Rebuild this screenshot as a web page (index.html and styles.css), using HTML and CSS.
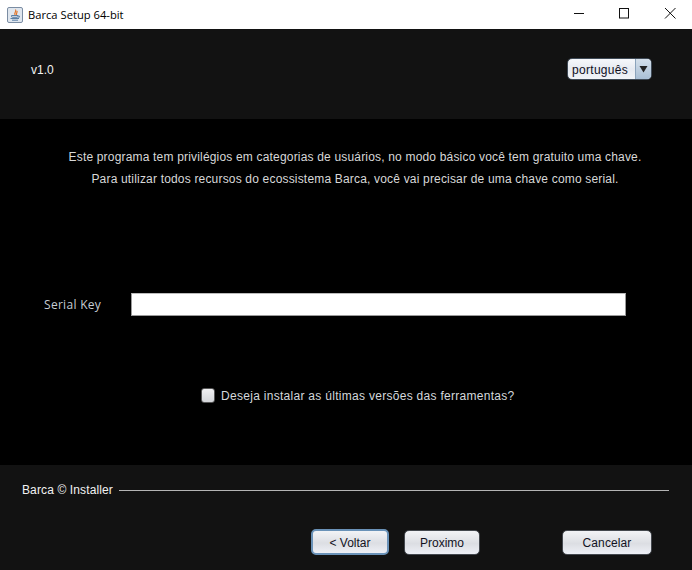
FILE: index.html
```html
<!DOCTYPE html>
<html lang="pt">
<head>
<meta charset="utf-8">
<title>Barca Setup 64-bit</title>
<link rel="stylesheet" href="styles.css">
</head>
<body>
<div class="window">
  <div class="titlebar">
    <svg class="app-icon" width="16" height="16" viewBox="0 0 16 16">
      <rect x="0.5" y="0.5" width="15" height="15" rx="1.5" fill="#dfe6ee" stroke="#7b8da3"/>
      <path d="M8.5 2.5C10 4.5 6.8 5.5 8 8M10 4C10.5 5.5 9 6 9.5 8" fill="none" stroke="#e2762a" stroke-width="1.2"/>
      <path d="M4.5 8.5h6.5v.8q0 1-1 1H5.500q-1 0-1-1zM3.500 11.500h8.500M5 13.200h6" fill="none" stroke="#5a7fa5" stroke-width="1"/>
      <path d="M11 9h1.500v1.200H11" fill="none" stroke="#5a7fa5" stroke-width="0.8"/>
    </svg>
    <span class="title-text">Barca Setup 64-bit</span>
    <div class="controls">
      <svg class="ctl" width="46" height="29" viewBox="0 0 46 29"><path d="M20 13.500h10" stroke="#111" stroke-width="1"/></svg>
      <svg class="ctl" width="46" height="29" viewBox="0 0 46 29"><rect x="19.500" y="8.500" width="9" height="9.500" fill="none" stroke="#111"/></svg>
      <svg class="ctl" width="46" height="29" viewBox="0 0 46 29"><path d="M19 8l10.500 10.500M29.500 8L19 18.500" stroke="#111" stroke-width="1" fill="none"/></svg>
    </div>
  </div>

  <header class="top">
    <span class="version">v1.0</span>
    <div class="combo">
      <span class="combo-value">português</span>
      <span class="combo-arrow"><svg width="9" height="8" viewBox="0 0 9 8"><path d="M0.500 1h8L4.500 7.500z" fill="#222"/></svg></span>
    </div>
  </header>

  <main class="content">
    <div class="intro">
      <p>Este programa tem privilégios em categorias de usuários, no modo básico você tem gratuito uma chave.</p>
      <p>Para utilizar todos recursos do ecossistema Barca, você vai precisar de uma chave como serial.</p>
    </div>
    <div class="serial-row">
      <label class="serial-label" for="serial">Serial Key</label>
      <input class="serial-input" id="serial" type="text">
    </div>
    <div class="check-row">
      <span class="checkbox"></span>
      <span class="check-text">Deseja instalar as últimas versões das ferramentas?</span>
    </div>
  </main>

  <footer class="bottom">
    <div class="titled-rule">
      <span class="rule-text">Barca © Installer</span>
      <span class="rule-line"></span>
    </div>
    <div class="buttons">
      <button class="btn btn-back">&lt; Voltar</button>
      <button class="btn btn-next">Proximo</button>
      <button class="btn btn-cancel">Cancelar</button>
    </div>
  </footer>
</div>
</body>
</html>
```
FILE: styles.css
```css
* { box-sizing: border-box; }
html, body { margin: 0; padding: 0; }
body { width: 692px; height: 570px; overflow: hidden; background: #000; font-family: "Liberation Sans", Arial, sans-serif; font-size: 12px; }
.window { display: flex; flex-direction: column; width: 692px; height: 570px; }

.titlebar { display: flex; align-items: center; height: 29px; background: #fff; padding-left: 7px; color: #000; }
.app-icon { flex: none; }
.title-text { margin-left: 5px; font-family: "Open Sans", "Noto Sans", sans-serif; font-size: 11.200px; }
.controls { display: flex; margin-left: auto; }
.ctl { display: block; }

.top { display: flex; align-items: center; justify-content: space-between; height: 90px; padding: 0 40px 10px 31px; background: #121212; }
.version { margin-top: 2px; color: #f2f2f2; }
.combo { display: flex; width: 85px; height: 22px; border: 1px solid #3f4a56; border-radius: 5px; overflow: hidden; background: linear-gradient(#f6f8fb, #e6eaf1 50%, #f1f4f8); color: #10101e; }
.combo-value { flex: 1; padding: 1px 0 0 4px; line-height: 20px; letter-spacing: 0.300px; }
.combo-arrow { display: flex; align-items: center; justify-content: center; width: 16px; background: linear-gradient(#d4dfea, #a9bfd5); border-left: 1px solid #8ba3bb; }

.content { display: flex; flex-direction: column; height: 346px; background: #000; color: #d8d8d8; }
.intro { padding: 27px 0 0 18px; text-align: center; line-height: 22px; letter-spacing: 0.180px; }
.intro p { margin: 0; }
.serial-row { display: flex; align-items: center; margin-top: 103px; padding-left: 44px; }
.serial-label { width: 87px; font-family: "Open Sans", "Noto Sans", sans-serif; font-size: 12px; letter-spacing: 0.300px; color: #c6cdd4; }
.serial-input { width: 495px; height: 23px; border: 1px solid #9a9a9a; border-top-color: #bbb; background: #fff; outline: 0; padding: 0; }
.check-row { display: flex; align-items: center; margin-top: 72px; padding-left: 201px; }
.checkbox { width: 14px; height: 15px; border: 1px solid #555; border-radius: 3px; background: linear-gradient(#f0f0f2, #d4d6da); }
.check-text { margin: 1px 0 0 6px; color: #d4d8dc; letter-spacing: 0.290px; }

.bottom { display: flex; flex-direction: column; flex: 1; background: #121212; }
.titled-rule { display: flex; align-items: center; margin-top: 18px; padding: 0 23px 0 22px; height: 14px; }
.rule-text { color: #f2f2f2; letter-spacing: 0.120px; }
.rule-line { flex: 1; height: 1px; margin-left: 6px; background: #b4b4b4; }
.buttons { display: flex; align-items: flex-start; margin-top: 33px; padding-left: 311px; }
.btn { height: 25px; padding: 0; border: 1px solid #44484e; border-radius: 5px; background: linear-gradient(#f2f3f6, #dcdee3 55%, #eef0f6); color: #12121e; font: 12px "Liberation Sans", Arial, sans-serif; }
.btn-back { width: 78px; height: 26px; margin-top: -1px; padding-top: 2px; border: 2px solid #6a92b8; }
.btn-next { width: 76px; margin-left: 15px; }
.btn-cancel { width: 90px; margin-left: 82px; letter-spacing: 0.100px; }
```
